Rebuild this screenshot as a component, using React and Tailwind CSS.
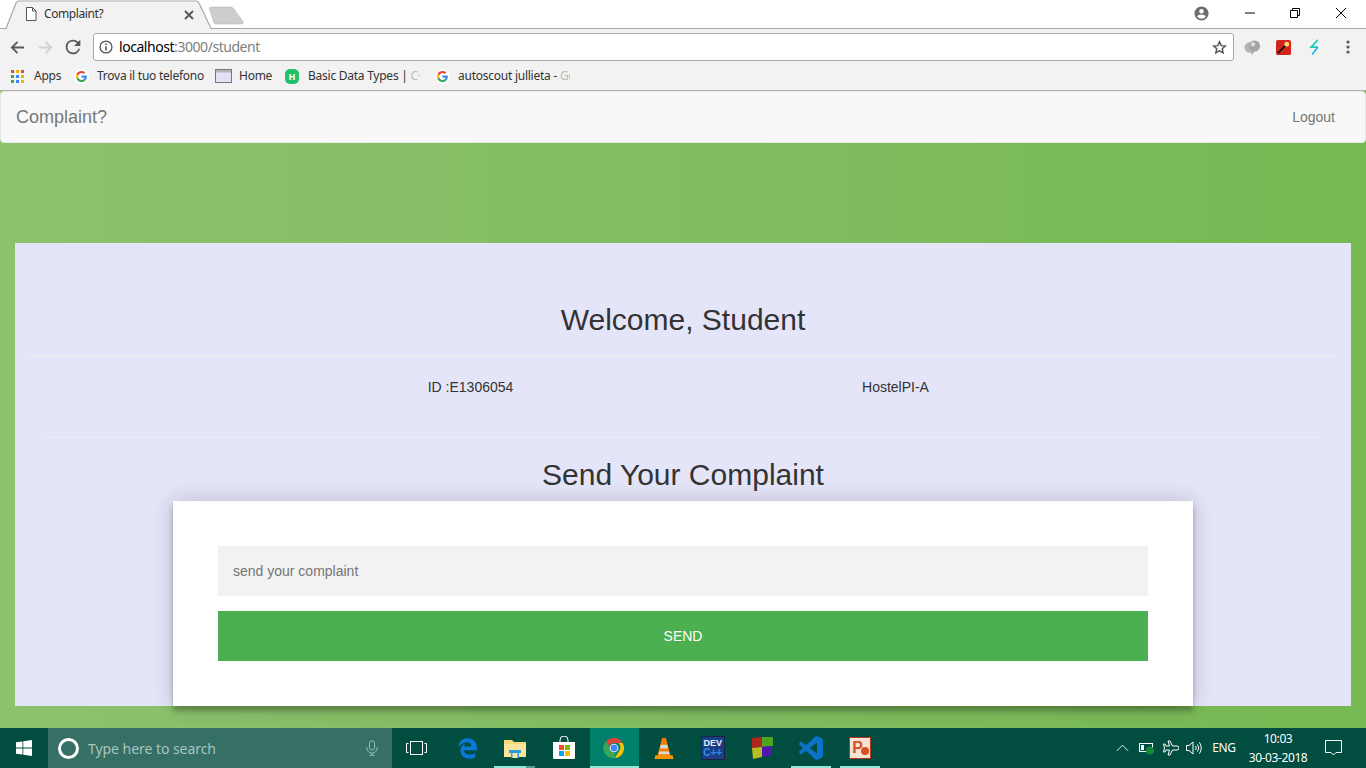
import React from "react";
import { FaEdgeLegacy } from "react-icons/fa6";

const GoogleG = ({ className }) => (
  <svg viewBox="0 0 48 48" className={className}>
    <circle cx="24" cy="24" r="24" fill="#fff" />
    <g transform="translate(6 6) scale(0.75)">
      <path fill="#EA4335" d="M24 9.5c3.5 0 6.7 1.2 9.2 3.6l6.9-6.9C35.9 2.4 30.5 0 24 0 14.6 0 6.5 5.4 2.6 13.2l8 6.2C12.5 13.7 17.800 9.500 24 9.500z" />
      <path fill="#4285F4" d="M46.900 24.500c0-1.600-.1-3.100-.4-4.500H24v9h12.900c-.6 3-2.200 5.500-4.700 7.200l7.700 6c4.400-4.200 7-10.300 7-17.700z" />
      <path fill="#FBBC05" d="M10.600 28.600c-.5-1.400-.8-3-.8-4.600s.3-3.200.8-4.600l-8-6.200C.9 16.500 0 20.100 0 24s.9 7.500 2.600 10.800l8-6.200z" />
      <path fill="#34A853" d="M24 48c6.500 0 11.900-2.100 15.900-5.800l-7.700-6c-2.200 1.400-4.900 2.300-8.200 2.300-6.200 0-11.500-4.200-13.400-9.900l-8 6.200C6.500 42.600 14.600 48 24 48z" />
    </g>
  </svg>
);

const AppsGrid = () => {
  const colors = ["#e8453c", "#f4b400", "#e8453c", "#34a853", "#4285f4", "#f4b400", "#34a853", "#4285f4", "#f4b400"];
  return (
    <div className="grid grid-cols-3 gap-[2px] w-[13px] h-[13px]">
      {colors.map((c, i) => (
        <span key={i} className="w-[3px] h-[3px]" style={{ backgroundColor: c }} />
      ))}
    </div>
  );
};

const TabShape = () => (
  <svg width="250" height="30" viewBox="0 0 250 30" className="absolute left-0 top-0">
    <path d="M6 29.500L16 3Q17 1 19 1H196Q198 1 199 3L211 29.500Z" fill="#f2f2f2" />
    <path d="M6 28.500L16 3Q17 1 19 1H196Q198 1 199 3L211 28.500" fill="none" stroke="#a9a9a9" strokeWidth="1.200" />
    <path d="M209.500 9Q209 7 211 7H231Q232.500 7 233.500 8.500L243 21.500Q244 24 241 24H215.500Q214 24 213.500 22Z" fill="#cdcdcd" stroke="#bbbbbb" strokeWidth="0.600" />
  </svg>
);

const Bookmark = ({ icon, text, fade, width, iconW, rest = 0 }) => (
  <div className="flex items-center">
    <span className="flex justify-start shrink-0" style={{ width: iconW }}>{icon}</span>
    <span className="overflow-hidden whitespace-nowrap text-[12px] text-[#333] tracking-[-0.25px]" style={{ width, marginRight: rest }}>
      {text}
      {fade && <span className="text-[#bbb]">{fade}</span>}
    </span>
  </div>
);

const TaskSlot = ({ children, active, underline, split }) => (
  <div className={`relative w-[49.2px] h-[40px] flex items-center justify-center shrink-0 ${active ? "bg-[#00806b]" : ""}`}>
    {children}
    {underline && (
      <span className={`absolute bottom-0 h-[2px] bg-[#8fe8d8] ${active ? "left-0 right-0" : "left-[4px] right-[5px]"}`} />
    )}
    {split && <span className="absolute bottom-0 right-[5px] w-[9px] h-[2px] bg-[#5a9c90]" />}
  </div>
);

const ChromeLogo = () => (
  <svg viewBox="0 0 48 48" className="w-[22px] h-[22px]">
    <path fill="#db4437" d="M24 2a22 22 0 0 1 19 11H24a11 11 0 0 0-10.500 7.500L6.500 9.500A22 22 0 0 1 24 2z" />
    <path fill="#f4c20d" d="M43 13a22 22 0 0 1-17 33l9-16a11 11 0 0 0-2-17z" />
    <path fill="#3aa757" d="M6.500 9.500l9 15.500A11 11 0 0 0 28 34.500L26 46A22 22 0 0 1 6.500 9.500z" />
    <circle cx="24" cy="24" r="9.500" fill="#fff" />
    <circle cx="24" cy="24" r="7.500" fill="#4285f4" />
  </svg>
);

export default function App() {
  return (
    <div className="h-screen w-full flex flex-col overflow-hidden font-['Liberation_Sans',sans-serif]">
      {/* browser chrome */}
      <header className="font-['Noto_Sans',sans-serif] shrink-0">
        <div className="relative h-[29px] bg-white border-b border-[#a9a9a9] flex items-start justify-end">
          <TabShape />
          <svg viewBox="0 0 12 14" className="absolute left-[25px] top-[7px] w-[12px] h-[14px]" fill="#fff" stroke="#555" strokeWidth="1">
            <path d="M1.500 .5H7.500L11 4V13.500H1.500Z" />
            <path d="M7.500 .5V4H11" fill="none" />
          </svg>
          <span className="absolute left-[44px] top-[5px] text-[12px] leading-[18px] text-[#333] tracking-[-0.4px]">Complaint?</span>
          <svg viewBox="0 0 10 10" className="absolute left-[184px] top-[10px] w-[10px] h-[10px]" stroke="#555" strokeWidth="1.800">
            <path d="M1 1L9 9M9 1L1 9" />
          </svg>
          <div className="flex items-center h-[26px] text-black">
            <svg viewBox="0 0 24 24" className="w-[17px] h-[17px] mr-[35px]" fill="#6e6e6e">
              <path d="M12 2a10 10 0 1 0 0 20 10 10 0 0 0 0-20zm0 3.500a3.200 3.200 0 1 1 0 6.400 3.200 3.200 0 0 1 0-6.400zm0 14a7.700 7.700 0 0 1-6-2.900c0-2 4-3.100 6-3.100s6 1.100 6 3.100a7.700 7.700 0 0 1-6 2.900z" />
            </svg>
            <svg viewBox="0 0 10 10" className="w-[10px] h-[10px] mr-[35px]" stroke="#000" strokeWidth="1">
              <path d="M0 5H10" />
            </svg>
            <svg viewBox="0 0 10 10" className="w-[10px] h-[10px] mr-[36px]" stroke="#000" strokeWidth="1" fill="none">
              <path d="M.5 2.500H7.500V9.500H.5ZM2.500 2.500V.5H9.500V7.500H7.500" />
            </svg>
            <svg viewBox="0 0 10 10" className="w-[10px] h-[10px] mr-[20px]" stroke="#000" strokeWidth="1">
              <path d="M0 0L10 10M10 0L0 10" />
            </svg>
          </div>
        </div>
        <div className="h-[37px] bg-[#f2f2f2] flex items-center pb-[1px]">
          <div className="w-[93px] flex items-center shrink-0 pl-[10px]">
            <svg viewBox="0 0 16 16" className="w-[15px] h-[15px] mr-[13px]" fill="none" stroke="#5a5a5a" strokeWidth="2">
              <path d="M15 8H2M8 2L2 8L8 14" />
            </svg>
            <svg viewBox="0 0 16 16" className="w-[15px] h-[15px] mr-[9px]" fill="none" stroke="#d0d0d0" strokeWidth="2">
              <path d="M1 8H14M8 2L14 8L8 14" />
            </svg>
            <svg viewBox="0 0 24 24" className="w-[22px] h-[22px]" fill="#5a5a5a">
              <path d="M17.650 6.350A7.950 7.950 0 0 0 12 4a8 8 0 1 0 7.730 10h-2.080A6 6 0 1 1 12 6c1.660 0 3.140.69 4.220 1.780L13 11h7V4l-2.350 2.350z" />
            </svg>
          </div>
          <div className="w-[1141px] h-[28px] bg-white border border-[#a9a9a9] rounded-[3px] flex items-center shrink-0">
            <svg viewBox="0 0 16 16" className="w-[14px] h-[14px] ml-[5px] mr-[6px]" fill="none" stroke="#555" strokeWidth="1.500">
              <circle cx="8" cy="8" r="6.800" />
              <path d="M8 7V12M8 4V5.800" strokeWidth="1.800" />
            </svg>
            <span className="text-[14px] leading-none text-black tracking-[-0.45px]">
              localhost<span className="text-[#808080]">:3000/student</span>
            </span>
            <svg viewBox="0 0 24 24" className="w-[15px] h-[15px] ml-auto mr-[6px]" fill="none" stroke="#555" strokeWidth="2.400">
              <path d="M12 3l2.800 6 6.500.7-4.900 4.400 1.400 6.400L12 17.200l-5.800 3.300 1.400-6.400-4.900-4.400 6.500-.7z" />
            </svg>
          </div>
          <div className="flex items-center ml-[10px]">
            <svg viewBox="0 0 18 16" className="w-[17px] h-[15px] mr-[15px]">
              <circle cx="6" cy="8" r="5.500" fill="#b5b5b5" />
              <circle cx="11" cy="6.500" r="6" fill="#a3a3a3" />
              <circle cx="9.500" cy="4.500" r="2.400" fill="#dadada" />
              <path d="M7 12L8.500 16L11 12Z" fill="#a8a8a8" />
            </svg>
            <svg viewBox="0 0 16 16" className="w-[15px] h-[15px] mr-[18px]">
              <rect width="16" height="16" rx="2" fill="#d2261c" />
              <path d="M2 14L10 6" stroke="#111" strokeWidth="1.800" />
              <circle cx="11.500" cy="4.500" r="2.600" fill="#ffd76a" />
            </svg>
            <svg viewBox="0 0 12 18" className="w-[12px] h-[17px] mr-[25px]" fill="none" strokeWidth="1.800">
              <path d="M9 1L2 8.500H9" stroke="#0fcfb3" />
              <path d="M9 8.500L3 16.500" stroke="#26b6e6" />
            </svg>
            <svg viewBox="0 0 4 14" className="w-[4px] h-[14px]" fill="#5a5a5a">
              <circle cx="2" cy="2" r="1.600" />
              <circle cx="2" cy="7" r="1.600" />
              <circle cx="2" cy="12" r="1.600" />
            </svg>
          </div>
        </div>
        <div className="h-[25px] bg-[#f2f2f2] border-b border-[#b0b0b0] flex items-center pl-[11px] pb-[4px]">
          <Bookmark iconW={23} width={40} text="Apps" icon={<AppsGrid />} />
          <Bookmark iconW={23} width={118} text="Trova il tuo telefono" icon={<GoogleG className="w-[15px] h-[15px]" />} />
          <Bookmark iconW={24} width={46} text="Home" icon={
            <svg viewBox="0 0 17 14" className="w-[17px] h-[14px]">
              <rect x=".5" y=".5" width="16" height="13" fill="#e2e2f4" stroke="#777" />
              <rect x="1" y="1" width="15" height="2.500" fill="#b5b5b5" />
            </svg>
          } />
          <Bookmark iconW={23} width={112} rest={15} text="Basic Data Types | " fade="C+" icon={
            <span className="flex items-center justify-center w-[14px] h-[15px] rounded-[5px] bg-[#1fc16b] text-white text-[9px] font-bold leading-none">H</span>
          } />
          <Bookmark iconW={23} width={112} text="autoscout jullieta - " fade="Go" icon={<GoogleG className="w-[15px] h-[15px]" />} />
        </div>
      </header>

      {/* page */}
      <main className="flex-1 min-h-0 bg-linear-to-l from-[#76b852] to-[#8dc26f]">
        <nav className="h-[52px] bg-[#f8f8f8] border border-[#e7e7e7] rounded-[4px] flex items-center justify-between pl-[15px] pr-[30px]">
          <span className="text-[18px] text-[#777]">Complaint?</span>
          <span className="text-[14px] text-[#777]">Logout</span>
        </nav>
        <section className="mt-[100px] mx-[15px] h-[463px] bg-[#e5e5f9] pt-[60px] text-[#333]">
          <h2 className="text-[30px] leading-[33px] text-center">Welcome, Student</h2>
          <hr className="mt-[20px] mx-[16px] border-t border-[#eeeeee]" />
          <div className="mt-[20px] w-[850px] mx-auto grid grid-cols-2 text-center text-[14px] leading-[20px]">
            <div>ID :E1306054</div>
            <div>HostelPI-A</div>
          </div>
          <hr className="mt-[40px] mx-[32px] border-t border-[#eeeeee]" />
          <h2 className="mt-[20px] text-[30px] leading-[33px] text-center">Send Your Complaint</h2>
          <div className="mt-[10px] mx-auto w-[1020px] h-[205px] bg-white p-[45px] flex flex-col gap-[15px] shadow-[0_0_20px_0_rgba(0,0,0,0.2),0_5px_5px_0_rgba(0,0,0,0.24)]">
            <input
              placeholder="send your complaint"
              className="w-full h-[50px] bg-[#f2f2f2] px-[15px] text-[14px] outline-none placeholder:text-[#757575]"
            />
            <button className="w-full h-[50px] bg-[#4caf50] text-white text-[14px] uppercase">Send</button>
          </div>
        </section>
      </main>

      {/* taskbar */}
      <footer className="h-[40px] shrink-0 bg-[#014d3f] flex items-center font-['Noto_Sans',sans-serif]">
        <div className="w-[48px] flex justify-center shrink-0">
          <svg viewBox="0 0 16 16" className="w-[16px] h-[16px]" fill="#fff">
            <path d="M0 2.300L6.500 1.400V7.600H0ZM7.300 1.300L16 0V7.600H7.300ZM0 8.400H6.500V14.600L0 13.700ZM7.300 8.400H16V16L7.300 14.700Z" />
          </svg>
        </div>
        <div className="w-[344px] h-[40px] bg-[#356f66] flex items-center shrink-0 pl-[10px] pr-[14px]">
          <span className="w-[21px] h-[21px] rounded-full border-[3px] border-white mr-[9px] shrink-0" />
          <span className="text-[14px] pt-[1px] text-[#a9c4bf] tracking-[-0.05px]">Type here to search</span>
          <svg viewBox="0 0 14 18" className="w-[12px] h-[16px] ml-auto" fill="none" stroke="#a9c4bf" strokeWidth="1">
            <rect x="4" y=".5" width="6" height="11" rx="3" />
            <path d="M1 8V9a6 6 0 0 0 12 0V8M7 15V17.500M4 17.500H10" />
          </svg>
        </div>
        <TaskSlot>
          <svg viewBox="0 0 21 14" className="w-[21px] h-[14px]" fill="none" stroke="#fff" strokeWidth="1">
            <rect x="4.500" y=".5" width="12" height="13" />
            <path d="M2.500 2.500H.5V11.500H2.500M18.500 2.500H20.500V11.500H18.500" />
          </svg>
        </TaskSlot>
        <TaskSlot><FaEdgeLegacy className="w-[21px] h-[21px] ml-[3px] text-[#0a78d7]" /></TaskSlot>
        <TaskSlot underline split>
          <svg viewBox="0 0 22 20" className="w-[22px] h-[20px]">
            <path d="M0 2H8L10 4H22V19H0Z" fill="#f6d77a" />
            <path d="M0 6H22V19H0Z" fill="#fbe49c" />
            <path d="M5 12H17V15H15V20H7V15H5Z" fill="#2d9fe0" />
            <rect x="8.500" y="15" width="5" height="5" fill="#fbe49c" />
          </svg>
        </TaskSlot>
        <TaskSlot>
          <svg viewBox="0 0 24 24" className="w-[24px] h-[24px]">
            <path d="M8 6V4a4 4 0 0 1 8 0V6" fill="none" stroke="#fff" strokeWidth="1" />
            <path d="M1 6H23V22Q23 23 22 23H2Q1 23 1 22Z" fill="#fff" />
            <rect x="7" y="9" width="5" height="5" fill="#f25022" />
            <rect x="13" y="9" width="5" height="5" fill="#7fba00" />
            <rect x="7" y="15" width="5" height="5" fill="#00a4ef" />
            <rect x="13" y="15" width="5" height="5" fill="#ffb900" />
          </svg>
        </TaskSlot>
        <span className="w-[1px] shrink-0" />
        <TaskSlot active underline><ChromeLogo /></TaskSlot>
        <TaskSlot>
          <svg viewBox="0 0 20 24" className="w-[20px] h-[23px]">
            <path d="M8 1H12L17 20H3Z" fill="#f57c00" />
            <path d="M6.700 8H13.300L14.200 12H5.800Z" fill="#d8d8d8" />
            <path d="M5 15H15L15.800 18H4.200Z" fill="#d8d8d8" />
            <path d="M1 19H19L20 23H0Z" fill="#f59300" />
          </svg>
        </TaskSlot>
        <TaskSlot>
          <div className="w-[24px] h-[24px] bg-[#1b3f87] border border-[#1a2440] flex flex-col items-center justify-center font-['Liberation_Sans',sans-serif] font-bold leading-none">
            <span className="text-[9px] text-[#e8eef8] leading-[10px]">DEV</span>
            <span className="text-[10px] text-[#2f8de0] leading-[10px]">C++</span>
          </div>
        </TaskSlot>
        <TaskSlot>
          <svg viewBox="0 0 22 24" className="w-[22px] h-[24px]">
            <path d="M1 2L11 1V11L1 12Z" fill="#b3261e" />
            <path d="M11 1L22 1V10L11 11Z" fill="#4fa51f" />
            <path d="M1 12L11 11V21L2 23Z" fill="#b8bb22" />
            <path d="M11 11L21 10V19L11 21Z" fill="#5216b0" />
          </svg>
        </TaskSlot>
        <TaskSlot underline>
          <svg viewBox="0 0 24 24" className="w-[24px] h-[24px]" fill="#0a72c7">
            <path d="M23.150 2.587L18.210.21a1.494 1.494 0 0 0-1.705.29l-9.460 8.630-4.120-3.128a.999.999 0 0 0-1.276.057L.327 7.261A1 1 0 0 0 .326 8.740L3.899 12 .326 15.260a1 1 0 0 0 .001 1.479L1.650 17.940a.999.999 0 0 0 1.276.057l4.120-3.128 9.460 8.630a1.492 1.492 0 0 0 1.704.29l4.942-2.377A1.500 1.500 0 0 0 24 20.060V3.939a1.500 1.500 0 0 0-.85-1.352zm-5.146 14.861L10.826 12l7.178-5.448v10.896z" />
          </svg>
        </TaskSlot>
        <TaskSlot underline>
          <div className="relative w-[22px] h-[22px] bg-[#f7e3d6] border border-[#b8381c] flex items-center pl-[2px] font-['Liberation_Sans',sans-serif] font-bold text-[16px] leading-none text-[#d8501f]">
            P
            <span className="absolute right-[1px] bottom-[3px] w-[8px] h-[8px] rounded-full bg-[#d8501f]" />
          </div>
        </TaskSlot>
        <div className="flex-1 flex items-center justify-end h-full text-white">
          <svg viewBox="0 0 14 8" className="w-[13px] h-[8px] mr-[10px]" fill="none" stroke="#fff" strokeWidth="1">
            <path d="M1 7L7 1L13 7" />
          </svg>
          <svg viewBox="0 0 16 14" className="w-[16px] h-[14px] mr-[8px]">
            <rect x=".5" y="2.500" width="13" height="8" fill="none" stroke="#fff" />
            <rect x="2" y="4" width="3" height="5" fill="#fff" />
            <circle cx="11" cy="9.500" r="4" fill="#138a36" />
          </svg>
          <svg viewBox="0 0 16 16" className="w-[16px] h-[16px] mr-[7px]" fill="none" stroke="#fff" strokeWidth="1">
            <path d="M5 1H7L9.500 6H14Q16 6 16 8T14 10H9.500L7 15H5L6.500 10H3L2 12H.5L1.500 8L.5 4H2L3 6H6.500Z" />
          </svg>
          <svg viewBox="0 0 17 14" className="w-[17px] h-[14px] mr-[8px]" fill="none" stroke="#fff" strokeWidth="1">
            <path d="M.5 4.500H3L7 1V13L3 9.500H.5Z" />
            <path d="M9.500 5Q11 7 9.500 9M11.500 3.500Q14 7 11.500 10.500M13.500 1.500Q17 7 13.500 12.500" />
          </svg>
          <span className="text-[12px] w-[26px] text-center mr-[11px] tracking-[-0.3px]">ENG</span>
          <div className="w-[60px] flex flex-col items-center text-[12px] leading-[19px] mr-[17px] tracking-[-0.4px]">
            <span>10:03</span>
            <span>30-03-2018</span>
          </div>
          <svg viewBox="0 0 17 16" className="w-[17px] h-[16px] mr-[24px]" fill="none" stroke="#fff" strokeWidth="1">
            <path d="M.5 .5H16.500V12.500H11L8.500 15L6 12.500H.5Z" />
          </svg>
        </div>
      </footer>
    </div>
  );
}
